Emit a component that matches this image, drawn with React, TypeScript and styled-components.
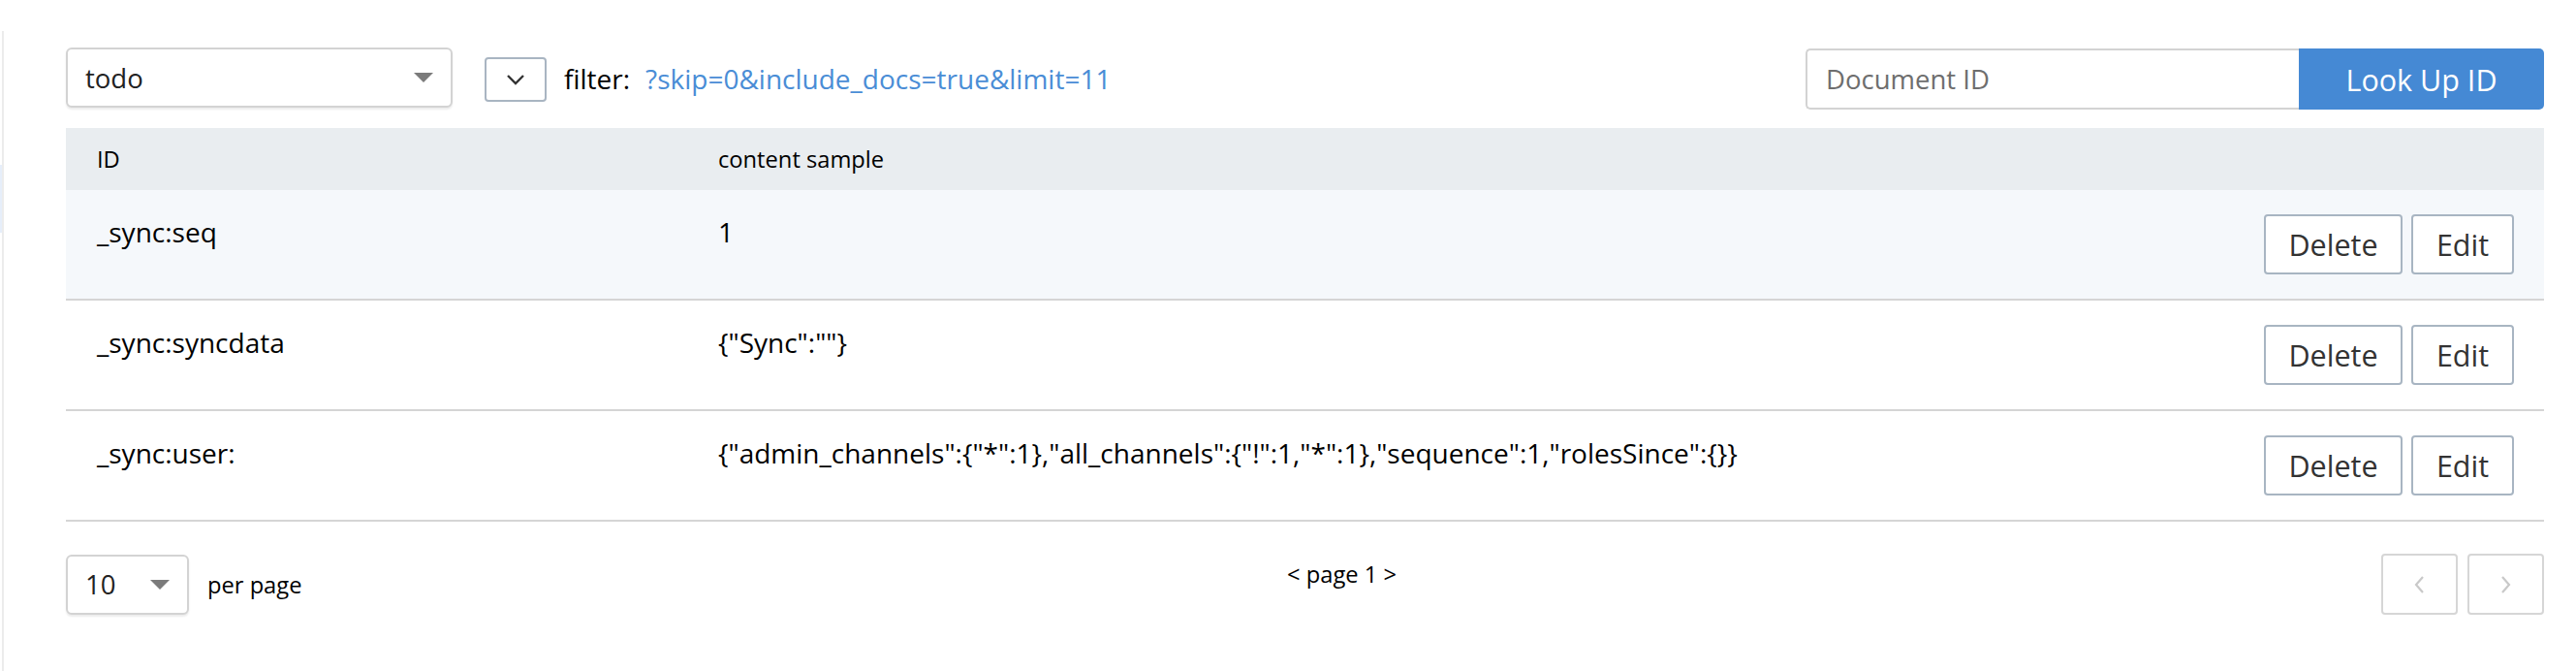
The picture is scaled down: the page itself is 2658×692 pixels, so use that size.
import * as React from "react";
import styled, { createGlobalStyle } from "styled-components";

const GlobalStyle = createGlobalStyle`
  html, body {
    margin: 0;
    padding: 0;
    background: #fff;
  }
  body {
    font-family: "Open Sans", "Liberation Sans", sans-serif;
    color: #000;
  }
`;

const Page = styled.div`
  display: flex;
  min-height: 692px;
`;

const Sidebar = styled.div`
  width: 2px;
  margin-top: 32px;
  border-right: 2px solid #ececec;
`;

const SidebarActive = styled.div`
  margin-top: 138px;
  height: 70px;
  background: #e6eefa;
`;

const Main = styled.div`
  flex: 1;
  padding: 49px 33px 0 64px;
`;

const Toolbar = styled.div`
  display: flex;
  align-items: flex-start;
  height: 64px;
  margin-bottom: 19px;
`;

const SelectBox = styled.div<{ $width: number }>`
  box-sizing: border-box;
  width: ${(p) => p.$width}px;
  height: 62px;
  display: flex;
  align-items: center;
  justify-content: space-between;
  padding: 0 18px 0 18px;
  border: 2px solid #d3d3d3;
  border-radius: 6px;
  box-shadow: 0 2px 2px rgba(0, 0, 0, 0.08);
  background: #fff;
  font-size: 27.5px;
  color: #222;
`;

const Caret = styled.span`
  width: 0;
  height: 0;
  border-left: 10px solid transparent;
  border-right: 10px solid transparent;
  border-top: 10px solid #7b7b7b;
`;

const ToggleButton = styled.button`
  box-sizing: border-box;
  width: 64px;
  height: 46px;
  margin: 10px 18px 0 33px;
  display: flex;
  align-items: center;
  justify-content: center;
  background: #fff;
  border: 2px solid #a9b5c2;
  border-radius: 4px;
  padding: 0;
`;

const FilterLabel = styled.span`
  font-size: 28px;
  line-height: 64px;
  margin-right: 16px;
`;

const FilterLink = styled.a`
  font-size: 28px;
  line-height: 64px;
  color: #4a8dd6;
  text-decoration: none;
`;

const Spacer = styled.div`
  flex: 1;
`;

const LookupGroup = styled.div`
  display: flex;
  height: 63px;
  margin-top: 1px;
`;

const IdInput = styled.input`
  box-sizing: border-box;
  width: 509px;
  height: 63px;
  border: 2px solid #d3d3d3;
  border-right: none;
  border-radius: 5px 0 0 5px;
  padding: 0 19px;
  font-family: inherit;
  font-size: 27.5px;
  outline: none;
  &::placeholder {
    color: #6e6e6e;
  }
`;

const LookupButton = styled.button`
  width: 253px;
  height: 63px;
  border: none;
  border-radius: 0 5px 5px 0;
  background: #4589d4;
  color: #fff;
  font-family: inherit;
  font-size: 30.5px;
`;

const Table = styled.div`
  display: flex;
  flex-direction: column;
`;

const HeaderRow = styled.div`
  display: grid;
  grid-template-columns: 641px 1fr auto;
  align-items: center;
  height: 64px;
  background: #e9edf0;
  font-size: 23.7px;
  line-height: 36px;
`;

const HeaderCell = styled.div`
  padding-left: 32px;
`;

const Row = styled.div<{ $highlighted?: boolean }>`
  box-sizing: border-box;
  display: grid;
  grid-template-columns: 641px 1fr auto;
  height: 114px;
  background: ${(p) => (p.$highlighted ? "#f5f8fb" : "#fff")};
  border-bottom: 2px solid #d5d5d5;
  font-size: 28px;
  line-height: 40px;
`;

const Cell = styled.div`
  padding: 23px 0 0 32px;
  white-space: nowrap;
`;

const Actions = styled.div`
  display: flex;
  align-items: center;
  gap: 9px;
  padding-right: 31px;
`;

const ActionButton = styled.button<{ $width: number }>`
  box-sizing: border-box;
  width: ${(p) => p.$width}px;
  height: 62px;
  background: #fff;
  border: 2px solid #a8b5c2;
  border-radius: 4px;
  color: #333;
  font-family: inherit;
  font-size: 30.5px;
  padding: 0;
`;

const Footer = styled.div`
  display: grid;
  grid-template-columns: 1fr auto 1fr;
  padding-top: 33px;
`;

const PerPage = styled.div`
  display: flex;
  align-items: center;
  gap: 19px;
  font-size: 23.7px;
`;

const PageInfo = styled.div`
  font-size: 23.7px;
  line-height: 36px;
  margin: 3px 0 0 76px;
`;

const PagerButtons = styled.div`
  display: flex;
  justify-content: flex-end;
  gap: 10px;
`;

const PagerButton = styled.button`
  box-sizing: border-box;
  width: 79px;
  height: 63px;
  display: flex;
  align-items: center;
  justify-content: center;
  background: #fff;
  border: 2px solid #d6d6d6;
  border-radius: 4px;
  padding: 0;
`;

const docs = [
  { id: "_sync:seq", sample: "1" },
  { id: "_sync:syncdata", sample: '{"Sync":""}' },
  {
    id: "_sync:user:",
    sample:
      '{"admin_channels":{"*":1},"all_channels":{"!":1,"*":1},"sequence":1,"rolesSince":{}}',
  },
];

function Chevron({ dir, color }: { dir: "down" | "left" | "right"; color: string }) {
  if (dir === "down") {
    return (
      <svg width="22" height="14" viewBox="0 0 22 14">
        <path d="M3 3 L11 11 L19 3" fill="none" stroke={color} strokeWidth="2.4" />
      </svg>
    );
  }
  const d = dir === "left" ? "M10 2 L3 10 L10 18" : "M3 2 L10 10 L3 18";
  return (
    <svg width="13" height="20" viewBox="0 0 13 20">
      <path d={d} fill="none" stroke={color} strokeWidth="2.2" />
    </svg>
  );
}

export default function App() {
  return (
    <Page>
      <GlobalStyle />
      <Sidebar>
        <SidebarActive />
      </Sidebar>
      <Main>
        <Toolbar>
          <SelectBox $width={399}>
            <span>todo</span>
            <Caret />
          </SelectBox>
          <ToggleButton>
            <Chevron dir="down" color="#333" />
          </ToggleButton>
          <FilterLabel>filter:</FilterLabel>
          <FilterLink href="#">?skip=0&amp;include_docs=true&amp;limit=11</FilterLink>
          <Spacer />
          <LookupGroup>
            <IdInput placeholder="Document ID" />
            <LookupButton>Look Up ID</LookupButton>
          </LookupGroup>
        </Toolbar>

        <Table>
          <HeaderRow>
            <HeaderCell>ID</HeaderCell>
            <HeaderCell>content sample</HeaderCell>
            <div />
          </HeaderRow>
          {docs.map((doc, i) => (
            <Row key={doc.id} $highlighted={i === 0}>
              <Cell>{doc.id}</Cell>
              <Cell>{doc.sample}</Cell>
              <Actions>
                <ActionButton $width={143}>Delete</ActionButton>
                <ActionButton $width={106}>Edit</ActionButton>
              </Actions>
            </Row>
          ))}
        </Table>

        <Footer>
          <PerPage>
            <SelectBox $width={127}>
              <span>10</span>
              <Caret />
            </SelectBox>
            <span>per page</span>
          </PerPage>
          <PageInfo>&lt; page 1 &gt;</PageInfo>
          <PagerButtons>
            <PagerButton>
              <Chevron dir="left" color="#c9c9c9" />
            </PagerButton>
            <PagerButton>
              <Chevron dir="right" color="#c9c9c9" />
            </PagerButton>
          </PagerButtons>
        </Footer>
      </Main>
    </Page>
  );
}
